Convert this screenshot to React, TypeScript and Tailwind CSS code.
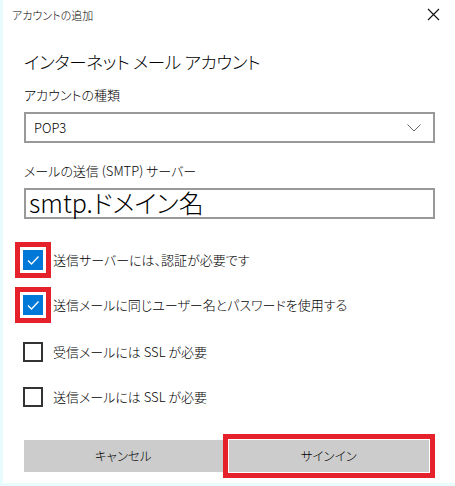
import { useState } from 'react';

const FONT = "[font-family:'Noto_Sans_CJK_JP','Noto_Sans',sans-serif] [font-feature-settings:'palt']";

interface Option { label: string; checked: boolean; marked: boolean; }

const initial: Option[] = [
  { label: '送信サーバーには、認証が必要です', checked: true, marked: true },
  { label: '送信メールに同じユーザー名とパスワードを使用する', checked: true, marked: true },
  { label: '受信メールには SSL が必要', checked: false, marked: false },
  { label: '送信メールには SSL が必要', checked: false, marked: false },
];

function CheckBox({ checked }: { checked: boolean }) {
  return checked ? (
    <span className="w-5 h-5 bg-[#0078d7] flex items-center justify-center">
      <svg width="14" height="14" viewBox="0 0 14 14" fill="none">
        <path d="M2 7.5 L5.5 11 L12.5 3.5" stroke="white" strokeWidth="1.3" />
      </svg>
    </span>
  ) : (
    <span className="w-5 h-5 border-2 border-[#333]" />
  );
}

export default function App() {
  const [opts, setOpts] = useState(initial);

  const toggle = (i: number) =>
    setOpts(o => o.map((x, j) => (j === i ? { ...x, checked: !x.checked } : x)));

  return (
    <div className={`w-[455px] h-[486px] bg-white text-black font-light border-l-[3px] border-b-[3px] border-[#e8fbfd] flex flex-col ${FONT}`}>
      {/* title bar */}
      <div className="h-[30px] flex items-center justify-between pl-[9px] pr-[15px]">
        <span className="text-[11px] leading-none">アカウントの追加</span>
        <svg width="13" height="13" viewBox="0 0 13 13" className="-mt-px">
          <path d="M1 1 L12 12 M12 1 L1 12" stroke="#111" strokeWidth="1.1" />
        </svg>
      </div>

      <div className="pl-[21px] pr-[20px] flex flex-col">
        <h1 className="mt-[18px] h-[28px] leading-[28px] text-[17.5px] tracking-[-0.3px] font-light">インターネット メール アカウント</h1>

        <p className="mt-[9px] h-[20px] leading-[20px] text-[13px]">アカウントの種類</p>
        <div className="mt-[7px] h-[31px] border-2 border-[#999] flex items-center justify-between pl-[8px] pr-[12px]">
          <span className="text-[13px]">POP3</span>
          <svg width="14" height="8" viewBox="0 0 14 8">
            <path d="M0.5 0.5 L7 7 L13.5 0.5" stroke="#666" strokeWidth="1" fill="none" />
          </svg>
        </div>

        <p className="mt-[18px] h-[20px] leading-[20px] text-[13px]">メールの送信 (SMTP) サーバー</p>
        <div className="mt-[7px] h-[31px] border-2 border-[#999] flex items-center pl-[3px]">
          <span className="text-[25px] leading-none -mt-[2px] font-light">smtp.ドメイン名</span>
        </div>

        <div className="flex flex-col -ml-[9px]">
          {opts.map((o, i) => (
            <button
              key={o.label}
              onClick={() => toggle(i)}
              className={`h-[36px] flex items-center text-left ${i === 0 ? 'mt-[23px]' : i === 2 ? 'mt-[11px]' : 'mt-[9px]'}`}
            >
              <span className={`w-[36px] h-[36px] flex items-center justify-center ${o.marked ? 'border-[5px] border-[#e5212b]' : ''}`}>
                <CheckBox checked={o.checked} />
              </span>
              <span className="ml-[2px] text-[13px]">{o.label}</span>
            </button>
          ))}
        </div>

        <div className="mt-[19px] flex items-center">
          <button className="w-[200px] h-[32px] bg-[#cccccc] text-[12.5px]">キャンセル</button>
          <div className="w-[214px] h-[44px] border-[5px] border-[#e5212b] p-px bg-white">
            <button className="w-full h-full bg-[#cccccc] text-[12.5px]">サインイン</button>
          </div>
        </div>
      </div>
    </div>
  );
}
